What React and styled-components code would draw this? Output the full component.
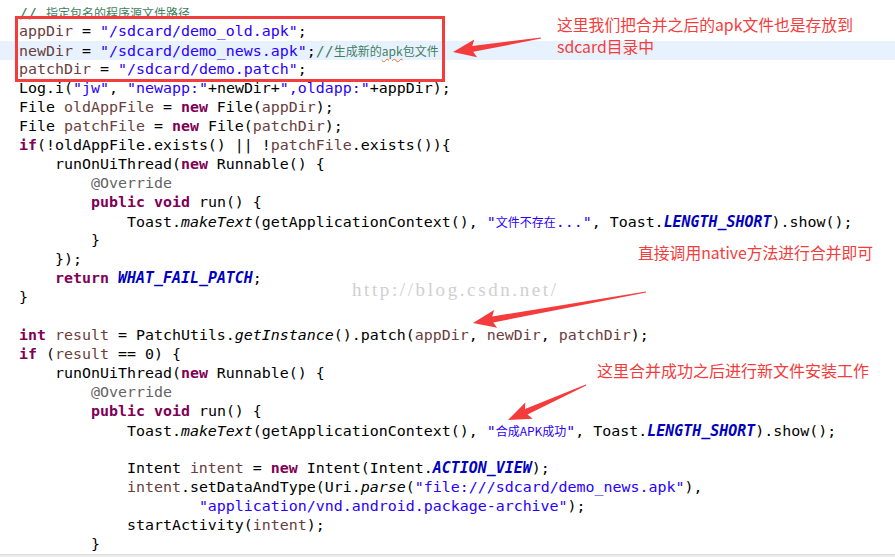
import React from 'react';
import styled, { createGlobalStyle } from 'styled-components';

const RED = '#f43c3c';

const GlobalStyle = createGlobalStyle`
    html, body {
        margin: 0;
        padding: 0;
        background: #fff;
    }
`;

const Page = styled.div`
    position: relative;
    width: 895px;
    height: 557px;
    overflow: hidden;
    display: flex;
    flex-direction: column;
    background: #fff;
`;

const Editor = styled.div`
    flex: 1;
    padding-top: 3px;
    font-family: "DejaVu Sans Mono", "Liberation Mono", monospace;
    font-size: 14.95px;
    color: #000;
`;

const Line = styled.div`
    height: 19px;
    line-height: 19px;
    padding-left: 19px;
    white-space: pre;
    background: ${({ $current }) => $current ? '#e8f2fe' : 'transparent'};
`;

// the lines that the red frame marks in the screenshot
const Marked = styled.div`
    position: relative;

    &::after {
        content: '';
        position: absolute;
        left: 15px;
        top: -6px;
        bottom: -3px;
        width: 424px;
        border: 3px solid ${RED};
        pointer-events: none;
    }
`;

const Kw = styled.span`
    color: #7f0055;
    font-weight: bold;
`;
const Str = styled.span`
    color: #2a00ff;
`;
const Cmt = styled.span`
    color: #3f7f5f;
`;
const Ann = styled.span`
    color: #646464;
`;
const Var = styled.span`
    color: #6a3e3e;
`;
const Const = styled.span`
    color: #0000c0;
    font-weight: bold;
    font-style: italic;
`;
const Ital = styled.span`
    font-style: italic;
`;
const Cjk = styled.span`
    font-family: "Noto Sans CJK SC", sans-serif;
    font-size: 12px;
    font-weight: normal;
    font-style: normal;
`;
const Typo = styled(Cjk)`
    color: #3f7f5f;
    text-decoration: underline wavy #ef6b2e;
    text-decoration-thickness: 1px;
    text-underline-offset: 2px;
`;

const ScrollBar = styled.div`
    height: 3px;
    background: #ececec;
    border-top: 1px solid #dcdcdc;
`;

const Note = styled.div`
    position: absolute;
    left: ${({ $x }) => $x}px;
    top: ${({ $y }) => $y}px;
    font-family: "Noto Sans CJK SC", "Microsoft YaHei", sans-serif;
    font-size: ${({ $size }) => $size}px;
    line-height: 22px;
    color: ${RED};
    white-space: nowrap;
`;

const Watermark = styled.div`
    position: absolute;
    left: 352px;
    top: 279px;
    font-family: "Liberation Serif", serif;
    font-size: 19px;
    letter-spacing: 2.6px;
    color: #d0d0d0;
    white-space: nowrap;
`;

const Overlay = styled.svg`
    position: absolute;
    left: 0;
    top: 0;
    pointer-events: none;
`;

const code = [
    [['c', '// 指定包名的程序源文件路径']],
    [['v', 'appDir'], ['t', ' = '], ['s', '"/sdcard/demo_old.apk"'], ['t', ';']],
    [['v', 'newDir'], ['t', ' = '], ['s', '"/sdcard/demo_news.apk"'], ['t', ';'], ['c', '//生成新的'], ['w', 'apk'], ['c', '包文件']],
    [['v', 'patchDir'], ['t', ' = '], ['s', '"/sdcard/demo.patch"'], ['t', ';']],
    [['t', 'Log.i('], ['s', '"jw"'], ['t', ', '], ['s', '"newapp:"'], ['t', '+newDir+'], ['s', '",oldapp:"'], ['t', '+appDir);']],
    [['t', 'File '], ['v', 'oldAppFile'], ['t', ' = '], ['k', 'new'], ['t', ' File('], ['v', 'appDir'], ['t', ');']],
    [['t', 'File '], ['v', 'patchFile'], ['t', ' = '], ['k', 'new'], ['t', ' File('], ['v', 'patchDir'], ['t', ');']],
    [['k', 'if'], ['t', '(!oldAppFile.exists() || !'], ['v', 'patchFile'], ['t', '.exists()){']],
    [['t', '    runOnUiThread('], ['k', 'new'], ['t', ' Runnable() {']],
    [['a', '        @Override']],
    [['t', '        '], ['k', 'public'], ['t', ' '], ['k', 'void'], ['t', ' run() {']],
    [['t', '            Toast.'], ['i', 'makeText'], ['t', '(getApplicationContext(), '], ['s', '"文件不存在..."'], ['t', ', Toast.'], ['f', 'LENGTH_SHORT'], ['t', ').show();']],
    [['t', '        }']],
    [['t', '    });']],
    [['t', '    '], ['k', 'return'], ['t', ' '], ['f', 'WHAT_FAIL_PATCH'], ['t', ';']],
    [['t', '}']],
    [],
    [['k', 'int'], ['t', ' '], ['v', 'result'], ['t', ' = PatchUtils.'], ['i', 'getInstance'], ['t', '().patch('], ['v', 'appDir'], ['t', ', '], ['v', 'newDir'], ['t', ', '], ['v', 'patchDir'], ['t', ');']],
    [['k', 'if'], ['t', ' ('], ['v', 'result'], ['t', ' == 0) {']],
    [['t', '    runOnUiThread('], ['k', 'new'], ['t', ' Runnable() {']],
    [['a', '        @Override']],
    [['t', '        '], ['k', 'public'], ['t', ' '], ['k', 'void'], ['t', ' run() {']],
    [['t', '            Toast.'], ['i', 'makeText'], ['t', '(getApplicationContext(), '], ['s', '"合成APK成功"'], ['t', ', Toast.'], ['f', 'LENGTH_SHORT'], ['t', ').show();']],
    [],
    [['t', '            Intent '], ['v', 'intent'], ['t', ' = '], ['k', 'new'], ['t', ' Intent(Intent.'], ['f', 'ACTION_VIEW'], ['t', ');']],
    [['t', '            '], ['v', 'intent'], ['t', '.setDataAndType(Uri.'], ['i', 'parse'], ['t', '('], ['s', '"file:///sdcard/demo_news.apk"'], ['t', '),']],
    [['t', '                    '], ['s', '"application/vnd.android.package-archive"'], ['t', ');']],
    [['t', '            startActivity('], ['v', 'intent'], ['t', ');']],
    [['t', '        }']],
];

const tokenTags = { k: Kw, s: Str, c: Cmt, a: Ann, v: Var, f: Const, i: Ital, t: React.Fragment };
const cjkRun = /([\u4e00-\u9fff][\u4e00-\u9fffA-Za-z]*[\u4e00-\u9fff]|[\u4e00-\u9fff])/;

// mixed-width text: CJK runs fall back to a proportional face, like the IDE does
const splitCjk = (text) =>
    text.split(cjkRun).map((part, i) => (i % 2 ? <Cjk key={i}>{part}</Cjk> : part));

const Token = ({ type, text }) => {
    if (type === 'w') return <Typo>{text}</Typo>;
    const Tag = tokenTags[type];
    return <Tag>{splitCjk(text)}</Tag>;
};

const CodeLine = ({ tokens, current }) => (
    <Line $current={current}>
        {tokens.map(([type, text], i) => <Token key={i} type={type} text={text} />)}
    </Line>
);

const arrowPoints = (tail, tip, headLen = 20, hw = 9, sw = 6) => {
    const dx = tail[0] - tip[0];
    const dy = tail[1] - tip[1];
    const len = Math.hypot(dx, dy);
    const ux = dx / len, uy = dy / len;
    const nx = -uy, ny = ux;
    const at = (d, o) => [tip[0] + ux * d + nx * o, tip[1] + uy * d + ny * o];
    const pts = [
        tip,
        at(headLen + 3, hw),
        at(headLen, sw / 2),
        [tail[0] + nx * 0.6, tail[1] + ny * 0.6],
        [tail[0] - nx * 0.6, tail[1] - ny * 0.6],
        at(headLen, -sw / 2),
        at(headLen + 3, -hw),
    ];
    return pts.map(p => p.map(v => v.toFixed(1)).join(',')).join(' ');
};

const arrows = [
    { tail: [541, 38], tip: [453, 52] },
    { tail: [646, 292], tip: [473, 323] },
    { tail: [586, 385], tip: [508, 420] },
];

const App = () => (
    <>
        <GlobalStyle />
        <Page>
            <Editor>
                <CodeLine tokens={code[0]} />
                <Marked>
                    {code.slice(1, 4).map((tokens, i) => (
                        <CodeLine key={i} tokens={tokens} current={i === 1} />
                    ))}
                </Marked>
                {code.slice(4).map((tokens, i) => (
                    <CodeLine key={i} tokens={tokens} />
                ))}
            </Editor>
            <ScrollBar />

            <Watermark>http://blog.csdn.net/</Watermark>
            <Note $x={557} $y={14} $size={15.8}>
                这里我们把合并之后的apk文件也是存放到<br />sdcard目录中
            </Note>
            <Note $x={638} $y={242} $size={15.8}>直接调用native方法进行合并即可</Note>
            <Note $x={597} $y={359} $size={16}>这里合并成功之后进行新文件安装工作</Note>
            <Overlay width="895" height="557">
                {arrows.map(({ tail, tip }, i) => (
                    <polygon key={i} points={arrowPoints(tail, tip)} fill={RED} />
                ))}
            </Overlay>
        </Page>
    </>
);

export default App;
